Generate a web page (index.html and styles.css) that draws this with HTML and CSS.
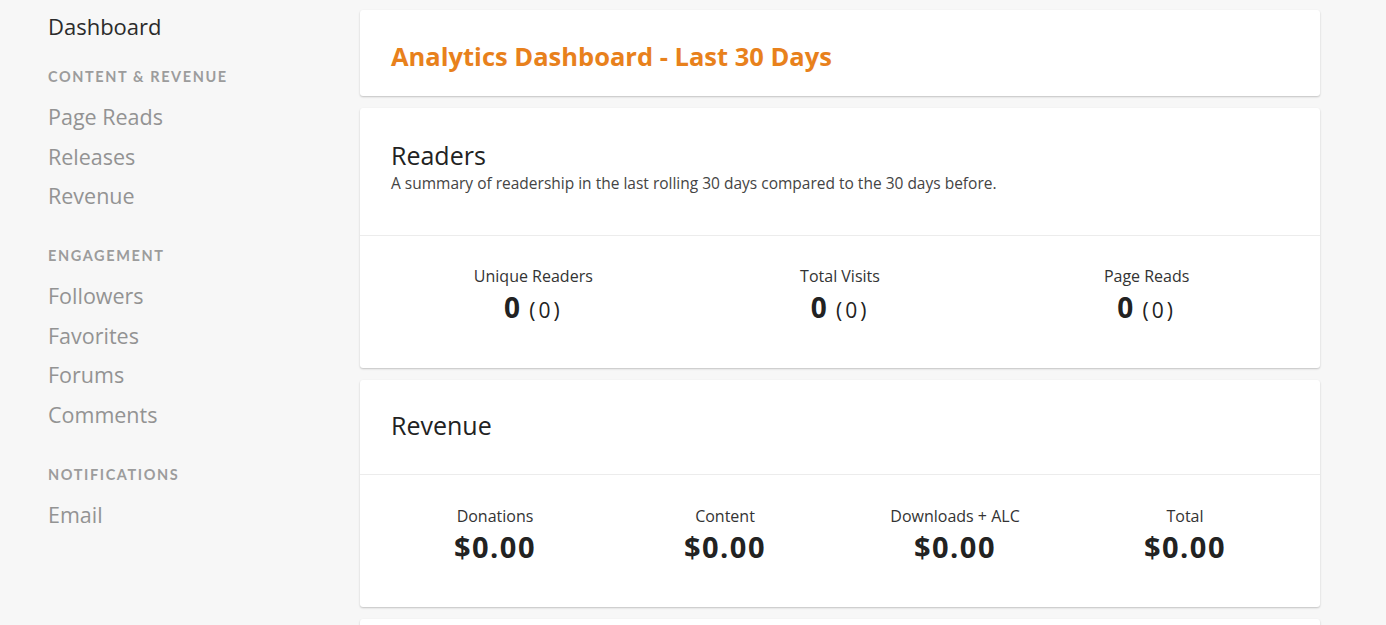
FILE: index.html
```html
<!DOCTYPE html>
<html lang="en">

<head>
  <meta charset="UTF-8" />
  <meta name="viewport" content="width=device-width, initial-scale=1.0" />
  <title>Analytics Dashboard</title>
  <link rel="stylesheet" href="styles.css">
</head>

<body>
  <div class="page">
    <nav class="sidebar">
      <a class="nav-link active" href="#">Dashboard</a>
      <div class="nav-group">
        <div class="nav-heading">Content &amp; Revenue</div>
        <a class="nav-link" href="#">Page Reads</a>
        <a class="nav-link" href="#">Releases</a>
        <a class="nav-link" href="#">Revenue</a>
      </div>
      <div class="nav-group">
        <div class="nav-heading">Engagement</div>
        <a class="nav-link" href="#">Followers</a>
        <a class="nav-link" href="#">Favorites</a>
        <a class="nav-link" href="#">Forums</a>
        <a class="nav-link" href="#">Comments</a>
      </div>
      <div class="nav-group">
        <div class="nav-heading">Notifications</div>
        <a class="nav-link" href="#">Email</a>
      </div>
    </nav>

    <main class="content">
      <section class="card title-card">
        <h1 class="page-title">Analytics Dashboard - Last 30 Days</h1>
      </section>

      <section class="card">
        <div class="card-head">
          <h2 class="card-title">Readers</h2>
          <p class="card-sub">A summary of readership in the last rolling 30 days compared to the 30 days before.</p>
        </div>
        <div class="stats stats-3">
          <div class="stat">
            <div class="stat-label">Unique Readers</div>
            <div class="stat-value">0 <span class="prev">(0)</span></div>
          </div>
          <div class="stat">
            <div class="stat-label">Total Visits</div>
            <div class="stat-value">0 <span class="prev">(0)</span></div>
          </div>
          <div class="stat">
            <div class="stat-label">Page Reads</div>
            <div class="stat-value">0 <span class="prev">(0)</span></div>
          </div>
        </div>
      </section>

      <section class="card">
        <div class="card-head compact">
          <h2 class="card-title">Revenue</h2>
        </div>
        <div class="stats stats-4">
          <div class="stat">
            <div class="stat-label">Donations</div>
            <div class="stat-value money">$0.00</div>
          </div>
          <div class="stat">
            <div class="stat-label">Content</div>
            <div class="stat-value money">$0.00</div>
          </div>
          <div class="stat">
            <div class="stat-label">Downloads + ALC</div>
            <div class="stat-value money">$0.00</div>
          </div>
          <div class="stat">
            <div class="stat-label">Total</div>
            <div class="stat-value money">$0.00</div>
          </div>
        </div>
      </section>

      <section class="card next-card"></section>
    </main>
  </div>
</body>

</html>
```

FILE: styles.css
```css
body {
  margin: 0;
  background: #f7f7f7;
  color: #333;
  font-family: "Open Sans", Lato, sans-serif;
  overflow: hidden;
}

.page {
  display: flex;
  align-items: flex-start;
}

.sidebar {
  width: 312px;
  padding: 10px 0 0 48px;
  display: flex;
  flex-direction: column;
}

.nav-link {
  display: block;
  font-size: 21.5px;
  line-height: 39.5px;
  color: #939393;
  text-decoration: none;
}

.nav-link.active {
  color: #2b2b2b;
  font-size: 22px;
  line-height: 32px;
}

.nav-group {
  margin-top: 25px;
  margin-bottom: 5.5px;
}

.nav-heading {
  font-family: Lato, sans-serif;
  font-size: 14.5px;
  font-weight: bold;
  letter-spacing: 1.6px;
  text-transform: uppercase;
  color: #9c9c9c;
  line-height: 20px;
  margin-bottom: 10px;
}

.content {
  width: 960px;
  padding-top: 10px;
  display: flex;
  flex-direction: column;
  gap: 12px;
}

.card {
  background: #fff;
  border-radius: 3px;
  box-shadow: 0 1px 2px rgba(0, 0, 0, 0.22);
}

.title-card {
  height: 86px;
  padding: 0 31px;
  display: flex;
  align-items: center;
  box-sizing: border-box;
}

.page-title {
  margin: 5px 0 0;
  font-size: 25.5px;
  font-weight: bold;
  color: #e8811c;
}

.card-head {
  padding: 31px 31px 0;
  height: 128px;
  box-sizing: border-box;
  border-bottom: 1px solid #ececec;
}

.card-head.compact {
  height: 95px;
  padding-top: 29px;
}

.card-title {
  margin: 0;
  font-size: 25px;
  font-weight: normal;
  line-height: 32px;
  color: #222;
}

.card-sub {
  margin: 1px 0 0;
  font-size: 15.5px;
  color: #444;
}

.stats {
  display: grid;
  padding: 29px 20px 38px;
  text-align: center;
}

.stats-3 {
  grid-template-columns: repeat(3, 1fr);
}

.stats-4 {
  grid-template-columns: repeat(4, 1fr);
  padding-top: 30px;
  padding-bottom: 40px;
}

.stat-label {
  font-size: 16px;
  line-height: 22px;
  color: #333;
}

.stat-value {
  font-size: 28px;
  font-weight: bold;
  line-height: 40px;
  color: #222;
}

.prev {
  font-weight: normal;
  font-size: 21px;
  letter-spacing: 3px;
  margin-left: 2px;
}

.stat-value.money {
  font-size: 29px;
  letter-spacing: 1.5px;
}

.next-card {
  height: 60px;
}
```
